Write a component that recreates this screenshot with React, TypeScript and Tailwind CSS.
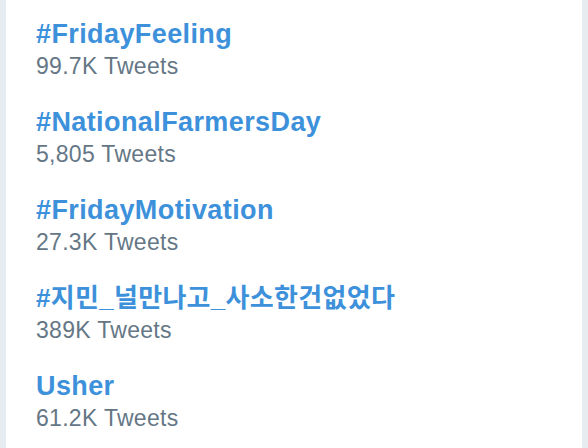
const trends = [
  { name: "#FridayFeeling", count: "99.7K Tweets" },
  { name: "#NationalFarmersDay", count: "5,805 Tweets" },
  { name: "#FridayMotivation", count: "27.3K Tweets" },
  { name: "#지민_널만나고_사소한건없었다", count: "389K Tweets", ko: true },
  { name: "Usher", count: "61.2K Tweets" },
];

export default function App() {
  return (
    <div className="flex h-[448px] w-[588px] overflow-hidden bg-[#e6ecf0] px-[6px] font-['Liberation_Sans','Noto_Sans_CJK_KR',sans-serif]">
      <div className="flex-1 bg-white pl-[30px] pt-[18px]">
        {trends.map((t) => (
          <div key={t.name} className="flex flex-col gap-[2px] pb-[26px]">
            <span
              className={
                t.ko
                  ? "text-[26px] leading-[32px] font-bold tracking-[0.3px] text-[#3d91db]"
                  : "text-[27px] leading-[32px] font-bold tracking-[0.4px] text-[#3d91db]"
              }
            >
              {t.name}
            </span>
            <span className="text-[23px] leading-[28px] tracking-[0.3px] text-[#657786]">{t.count}</span>
          </div>
        ))}
      </div>
    </div>
  );
}
